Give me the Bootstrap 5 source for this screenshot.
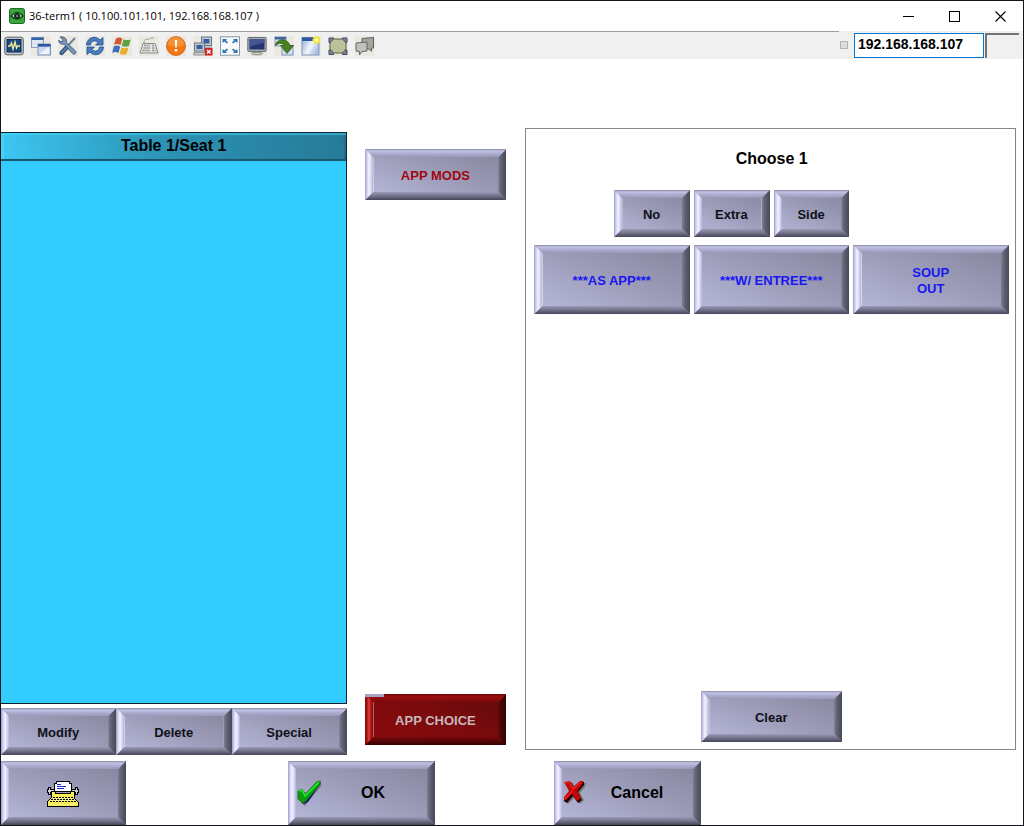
<!DOCTYPE html>
<html lang="en">
<head>
<meta charset="utf-8">
<meta name="viewport" content="width=device-width, initial-scale=1">
<title>36-term1</title>
<link href="https://cdn.jsdelivr.net/npm/bootstrap@5.3.0/dist/css/bootstrap.min.css" rel="stylesheet">
<style>
body{font-family:"Liberation Sans",Arial,sans-serif;background:#fff;color:#000}
.app-window{min-height:100vh;border:1px solid #14141c}
.title-bar{height:30px;font-family:"Open Sans","Noto Sans",sans-serif;font-size:11px;line-height:16px}
.win-btn{width:46px;height:28px;border:0;background:none;padding:0;display:flex;align-items:center;justify-content:center}
.tool-bar{height:28px;background:#f0f0f0}
.tool-list{border-top:1px solid #a0a0a0;gap:7px;padding:1px 0 0 3px}
.tool-btn{width:20px;height:20px;border:0;padding:0;background:#eae9e0;display:flex}
.tool-btn svg{width:20px;height:20px}
.status-lamp{width:8px;height:8px;border:1px solid #b4b4b4;background:#dcdcdc;margin:0 6px 0 1px}
.ip-field{width:130px;height:25px;border:1px solid #0078d7;border-radius:0;background:#fff;padding:0 3px 2px;font-size:14px;line-height:20px;font-weight:700;color:#000;outline:0}
.sunken{width:34px;height:25px;border:solid #737373;border-width:2px 0 0 2px;margin:0 4px 0 1px}
.work-area{display:grid;grid-template-columns:346fr 141fr 491fr;column-gap:18px;padding:69px 7px 6px 0}
.check-col{padding-top:4px}
.check-list{border:solid #10242e;border-width:1px 1px 1px 0;background:#3cf}
.check-head{height:28px;margin:0;font-size:16px;line-height:20px;font-weight:700;padding:3px 0;text-align:center;border-bottom:2px solid #1a566c;box-shadow:inset 3px 2px 1px #45dfff80,inset -2px 0 1px #20607880;background:linear-gradient(75deg,#3cc8f4,#2c92b4 48%,#267a98)}
.check-actions{display:grid;grid-template-columns:repeat(3,1fr);margin-top:4px}
.mid-col{padding:21px 0 10px}
.choice-panel{border:1px solid #858585;margin:0 0 5px 1px;padding:20px 6px 7px 8px}
.panel-title{font-size:16px;line-height:20px;font-weight:700;margin:0 0 21px;text-align:center}
.choice-grid{display:grid;grid-template-columns:repeat(6,1fr);column-gap:4px;row-gap:8px}
.choice-grid .first{grid-column-start:2}
.choice-grid .side{grid-column-end:span 3;width:calc((100% - 8px)/3)}
.choice-grid .wide{grid-column-end:span 2}
.key{position:relative;isolation:isolate;border:0;padding:2px 9px 0 8px;height:47px;font-size:13px;line-height:16px;font-weight:700;color:#101018;
 --face:linear-gradient(22deg,#babade,#9d9dba 50%,#83839a);
 --left:linear-gradient(90deg,#9a9ac4,#c8c8f0 20%,#f2f2ff 50%,#e4e4fa 65%,#b4b4dc);
 --right:linear-gradient(90deg,#7c7c94,#5e5e70 45%,#484856);
 --top:linear-gradient(#8a8aa4,#c2c2e8 25%,#acaccf 60%,#9898b6);
 --bottom:linear-gradient(#9a9ab8,#727288 50%,#46465a);
 background:var(--left) left/8px 100% no-repeat,var(--right) right/8px 100% no-repeat}
.key::before{content:"";position:absolute;inset:0;z-index:-1;clip-path:polygon(0 0,8px 8px,8px calc(100% - 8px),0 100%,100% 100%,calc(100% - 8px) calc(100% - 8px),calc(100% - 8px) 8px,100% 0);
 background:var(--top) top/100% 8px no-repeat,var(--bottom) bottom/100% 8px no-repeat,var(--face)}
.key-mid{height:51px}
.key-wide{height:69px;color:#1818f0}
.key-big{height:64px;font-size:16px;line-height:20px;color:#000;padding-top:0}
.key-mods{color:#a00810}
.key-red{color:#c4b8bc;
 --face:linear-gradient(22deg,#8e0a0c,#7c0a0c 50%,#620a0c);
 --left:linear-gradient(90deg,#780808,#a81414 25%,#e04040 50%,#a81414 75%,#8a0a0c);
 --right:linear-gradient(90deg,#5a0a0a,#480606 45%,#300404);
 --top:linear-gradient(#6a0606,#9a0e10 30%,#7c0a0c);
 --bottom:linear-gradient(#760a0a,#560606 50%,#340202)}
.key-red::after{content:"";position:absolute;left:0;top:0;width:19px;height:3px;background:#a4a4c6}
.clear-key{width:141px}
.foot-bar{display:grid;grid-template-columns:125fr 162fr 147fr 119fr 147fr 322fr}
.ok-key{grid-column:3}.cancel-key{grid-column:5}
.key-icon{width:28px;height:28px;flex:none}
.ok-key,.cancel-key{display:flex;align-items:center}
.key-label{flex:1;padding-right:4px}
.cancel-key .key-label{padding-right:8px}
</style>
</head>
<body>
<div class="app-window d-flex flex-column">
<header class="title-bar d-flex align-items-center">
 <svg class="ms-2 me-1" width="16" height="16" viewBox="0 0 16 16" aria-hidden="true"><rect x=".5" y=".5" width="15" height="15" rx="2" fill="#3aa63a" stroke="#1d6a24"/><path d="M2 8q6-7 12 0-6 6-12 0z" fill="#b5d5b4" stroke="#133c18" stroke-width="1.2"/><circle cx="8" cy="8" r="3" fill="#123018"/><circle cx="8" cy="8" r="1" fill="#87a988"/></svg>
 <span>36-term1 ( 10.100.101.101, 192.168.168.107 )</span>
 <div class="ms-auto d-flex">
  <button class="win-btn" type="button" aria-label="Minimize"><svg width="11" height="11" shape-rendering="crispEdges"><path d="M0 5.5h11" stroke="#000"/></svg></button>
  <button class="win-btn" type="button" aria-label="Maximize"><svg width="11" height="11" shape-rendering="crispEdges"><path d="M.5.5h10v10h-10z" fill="none" stroke="#000"/></svg></button>
  <button class="win-btn" type="button" aria-label="Close"><svg width="11" height="11"><path d="M.5.5l10 10M10.500.5l-10 10" stroke="#000" stroke-width="1.1"/></svg></button>
 </div>
</header>
<div class="tool-bar d-flex align-items-center">
 <div class="tool-list d-flex align-items-center flex-grow-1 h-100">
  <button class="tool-btn" type="button" aria-label="Monitor"><svg viewBox="0 0 20 20"><rect x=".7" y="1.200" width="18.600" height="17.600" rx="2.500" fill="#c3c7cc" stroke="#5c6470"/><rect x="3" y="3.500" width="14" height="12.500" fill="#174a80" stroke="#102c58"/><path d="M4 10h2l1.500-3 1.500 6 2-7 1.500 6 1-2h2.500" fill="none" stroke="#f3eb9a" stroke-width="1.400"/></svg></button>
  <button class="tool-btn" type="button" aria-label="Windows"><svg viewBox="0 0 20 20"><rect x=".5" y="1.500" width="12" height="10" fill="#dce5f2" stroke="#8a9cba"/><path d="M.5 1.500h12v2.500H.5z" fill="#3560a8"/><rect x="7" y="8" width="12.500" height="11" fill="#c9d8ee" stroke="#7e93b8"/><path d="M7 8h12.500v2.600H7z" fill="#2c55a0"/><path d="M8 18l10-7v7z" fill="#eef4fc"/></svg></button>
  <button class="tool-btn" type="button" aria-label="Tools"><svg viewBox="0 0 20 20"><path d="M17 2l-8 8.500" stroke="#75859c" stroke-width="2"/><path d="M9 11l-5.500 6" stroke="#2f4f80" stroke-width="4.200" stroke-linecap="round"/><path d="M9 11l-5.500 6" stroke="#6686b8" stroke-width="1.600"/><path d="M2 1l3 2.500-.5 2L2 5.500.8 4C.5 7 3 9 6 8l8.500 9.500c2 2 4.500-.5 3-2.500L8.500 6.500C9.500 3 6 0 2 1z" fill="#7c94b4" stroke="#3a5377" stroke-width=".8"/></svg></button>
  <button class="tool-btn" type="button" aria-label="Refresh"><svg viewBox="0 0 20 20"><path d="M1.500 9C2 1 11-1 15 4l3-2.500V9h-7.500l2.500-2.500C10 3.500 6 5 5.500 9z" fill="#4b7cc0" stroke="#1e4b8c" stroke-width=".8"/><path d="M18.500 11c-.5 8-9.500 10-13.500 5l-3 2.500V11h7.500L7 13.500c3 3 7 1.500 7.500-2.500z" fill="#4b7cc0" stroke="#1e4b8c" stroke-width=".8"/></svg></button>
  <button class="tool-btn" type="button" aria-label="Start menu"><svg viewBox="0 0 20 20"><path d="M4 2.500q3.500-2 6.300 0L8.500 9Q5.500 7 2 8.800z" fill="#cf5630"/><path d="M11.500 3.200q3.500 1.800 7.200 0L17 10q-4 1.600-7.300-.3z" fill="#62a044"/><path d="M1.800 10.200q3.300-1.700 6.400.2L6.500 17q-3-2-6.300-.2z" fill="#3f6fb9"/><path d="M9.500 11.200q3.500 1.800 7 .2L14.700 18q-3.500 1.600-6.900-.3z" fill="#e9ad28"/></svg></button>
  <button class="tool-btn" type="button" aria-label="Keyboard"><svg viewBox="0 0 20 20"><path d="M5 7C5 2 8 4 10 3s4-2 5 0" fill="none" stroke="#999"/><path d="M4 7.500h12l3 9.500H1z" fill="#e3e3df" stroke="#888" stroke-linejoin="round"/><path d="M5 9.500h6M4.500 12h6.500M3.500 14.500H11M13 9.500h2.500M13 12h3M13 14.500h3.800" stroke="#969696" stroke-width="1.500" stroke-dasharray="2 .6"/></svg></button>
  <button class="tool-btn" type="button" aria-label="Alert"><svg viewBox="0 0 20 20"><circle cx="10" cy="10" r="9.400" fill="#f47914" stroke="#c9661d"/><path d="M1.500 9a8.500 8 0 0117 0q-8 3-17 0z" fill="#fb9a44" opacity=".7"/><path d="M8.800 4h2.400l-.5 7.500H9.300z" fill="#fff"/><circle cx="10" cy="14.300" r="1.300" fill="#fff"/></svg></button>
  <button class="tool-btn" type="button" aria-label="Disconnect"><svg viewBox="0 0 20 20"><rect x="8.500" y="1" width="10" height="8.500" fill="#c4c9cf" stroke="#697686"/><path d="M10.500 3h6v4.500h-6z" fill="#365d9c"/><path d="M8 10.500h11v2.500H8z" fill="#a9aeb4"/><rect x="1.500" y="7" width="10" height="8" fill="#c4c9cf" stroke="#697686"/><path d="M3.500 9h6v4h-6z" fill="#365d9c"/><path d="M.8 16.500h11.500V19H.8z" fill="#cdd0d2" stroke="#777" stroke-width=".7"/><rect x="12" y="12" width="7.500" height="7.500" fill="#d31f20"/><path d="M14 14l3.500 3.500m0-3.500L14 17.500" stroke="#fff" stroke-width="1.500"/></svg></button>
  <button class="tool-btn" type="button" aria-label="Full screen"><svg viewBox="0 0 20 20"><rect x=".5" y=".8" width="19" height="18.400" fill="#f8fafc" stroke="#8a97a5"/><path d="M2.500 3H7L5.800 4.200l2.200 2.200-1.200 1.200-2.300-2.200L2.500 7zM17.500 3H13l1.200 1.200L12 6.400l1.200 1.200 2.300-2.200 2 1.600zM2.500 17H7l-1.200-1.200L8 13.600l-1.200-1.200-2.300 2.200-2-1.600zM17.500 17H13l1.200-1.200-2.200-2.200 1.200-1.200 2.300 2.200 2-1.600z" fill="#2f70b2"/></svg></button>
  <button class="tool-btn" type="button" aria-label="Display"><svg viewBox="0 0 20 20"><rect x=".8" y="1.500" width="18.400" height="14" rx="1" fill="#a8abb0" stroke="#6b6e76"/><rect x="2.500" y="3" width="15" height="10.500" fill="#263470"/><path d="M2.500 3h15v4q-8 1-15 4z" fill="#45558f"/><path d="M7 15.500h6v1.500H7z" fill="#777"/><ellipse cx="10" cy="17.500" rx="5.500" ry="1.500" fill="#c5c5c5" stroke="#777" stroke-width=".7"/></svg></button>
  <button class="tool-btn" type="button" aria-label="Transfer"><svg viewBox="0 0 20 20"><rect x="1" y="1" width="11" height="9" fill="#e3eaf4" stroke="#8a9cba"/><path d="M1 1h11v2.500H1z" fill="#3d65a8"/><rect x="8" y="10" width="11" height="9" fill="#d5e0f0" stroke="#7e93b8"/><path d="M1.500 9.500C2 2.500 13 1 16 9.500h3.500L13 17.500 6.500 9.500h4C9 7 5 6.500 1.500 9.500z" fill="#4a8020" stroke="#2e5c14" stroke-width=".8"/></svg></button>
  <button class="tool-btn" type="button" aria-label="New window"><svg viewBox="0 0 20 20"><defs><linearGradient id="nw" x2="1" y2=".5"><stop stop-color="#8eabda"/><stop offset=".6" stop-color="#f2f7fd"/><stop offset="1" stop-color="#a9c0e4"/></linearGradient></defs><rect x="1" y="1.500" width="17" height="17.500" fill="url(#nw)" stroke="#8498b8"/><path d="M1 1.500h17V5H1z" fill="#2e589e"/><circle cx="15.500" cy="4" r="3.500" fill="#f7e83a"/><path d="M15.500-.5v9M11 4h9M12.300 1l6.400 6.400m0-6.400l-6.400 6.400" stroke="#f2e84a" stroke-width="1"/><circle cx="15.500" cy="4" r="1.500" fill="#fffbd0"/></svg></button>
  <button class="tool-btn" type="button" aria-label="Select area"><svg viewBox="0 0 20 20"><path d="M1 2h4.500v4.500H1zM14.500 2H19v4.500h-4.500zM1 14h4.500v4.500H1zM14.500 14H19v4.500h-4.500z" fill="#77839a" stroke="#3f4b64"/><path d="M5.500 3h9l3.500 4v6l-3.500 4h-9L2 13V7z" fill="#bcc19a" stroke="#5b6048"/></svg></button>
  <button class="tool-btn" type="button" aria-label="Chat"><svg viewBox="0 0 20 20"><path d="M7 2.500l11.500-1V12l-2 .2v3L13 12.500l-6 .5z" fill="#a5a5a0" stroke="#60605c"/><path d="M1 7l11-1v9l-5 .5L4.500 19v-3.500L1 15z" fill="#c1c1bd" stroke="#666662"/></svg></button>
 </div>
 <span class="status-lamp"></span>
 <input class="ip-field" type="text" aria-label="Terminal address" value="192.168.168.107">
 <span class="sunken"></span>
</div>

<main class="work-area flex-grow-1">
 <section class="check-col d-flex flex-column">
  <div class="check-list flex-grow-1"><h1 class="check-head">Table 1/Seat 1</h1></div>
  <div class="check-actions">
   <button class="key" type="button">Modify</button>
   <button class="key" type="button">Delete</button>
   <button class="key" type="button">Special</button>
  </div>
 </section>
 <nav class="mid-col d-flex flex-column justify-content-between" aria-label="Modifier groups">
  <button class="key key-mid key-mods" type="button">APP MODS</button>
  <button class="key key-mid key-red" type="button">APP CHOICE</button>
 </nav>
 <section class="choice-panel d-flex flex-column">
  <h2 class="panel-title">Choose 1</h2>
  <div class="choice-grid">
   <button class="key first" type="button">No</button>
   <button class="key" type="button">Extra</button>
   <button class="key side" type="button">Side</button>
   <button class="key key-wide wide" type="button">***AS APP***</button>
   <button class="key key-wide wide" type="button">***W/ ENTREE***</button>
   <button class="key key-wide wide" type="button">SOUP<br>OUT</button>
  </div>
  <button class="key key-mid clear-key mt-auto mx-auto" type="button">Clear</button>
 </section>
</main>

<footer class="foot-bar">
 <button class="key key-big" type="button" aria-label="Type a message">
  <svg width="34" height="28" viewBox="0 0 34 28" shape-rendering="crispEdges"><path d="M10 2h13v2h2v8H8V4h2z" fill="#fff" stroke="#000"/><path d="M11 5h4M11 7h9M11 9h7" stroke="#1a28d8"/><path d="M2 8h2v2h4v3H4v2H2v-2H1v-3h1zM31 8h-2v2h-4v3h4v2h2v-2h1v-3h-1z" fill="#d0d0d8" stroke="#000"/><path d="M6 12h3v2h15v-2h4v7l4 4v4H1v-4l4-4z" fill="#f5ee52" stroke="#000"/><path d="M7 18h20M5 20h23M4 22h26" stroke="#000" stroke-dasharray="2 1"/><path d="M7 19h20M5 21h24" stroke="#fff" stroke-dasharray="1 2"/><path d="M3 25h28" stroke="#fffac0" stroke-dasharray="1 1"/></svg>
 </button>
 <button class="key key-big ok-key" type="button">
  <svg class="key-icon" viewBox="0 0 28 28"><path d="M5 14l5-1 1 6L24 5l2 1-14 17-3 4-4-3z" fill="#77778c"/><path d="M3 13l4-2 2 6L23 3l2 1-13 19-4 2-4-4z" fill="#101870"/><path d="M2 12l4-2 3 5.500L20.500 3l4-1-1 4L10 22l-3 2-5-4z" fill="#109c10" stroke="#087008" stroke-width=".8"/><path d="M3 12l3-1 3 6L23 3" fill="none" stroke="#20ee30" stroke-width="1.600"/></svg>
  <span class="key-label">OK</span>
 </button>
 <button class="key key-big cancel-key" type="button">
  <svg class="key-icon" viewBox="0 0 28 28"><path d="M5 5l6-1 3 6 6-6h4l-1 4-5 6 4 7-4 4-5-7-7 7-3-3 6-9z" fill="#77776f"/><path d="M3 4l6-1 3 6 7-7 3 1v3l-6 7 4 8-4 3-5-7-6 7-3-2v-3l6-7z" fill="#200008"/><path d="M2 3l6-1 3 6 7-6h3v2l-6 8 4 7-4 3-5-7-6 6H2v-3l5-6z" fill="#c00808"/><path d="M3 4l4-1 4 7 8-7M3 20l7-8" fill="none" stroke="#f02020" stroke-width="1.500"/></svg>
  <span class="key-label">Cancel</span>
 </button>
</footer>
</div>
<script src="https://cdn.jsdelivr.net/npm/bootstrap@5.3.0/dist/js/bootstrap.bundle.min.js"></script>
</body>
</html>
